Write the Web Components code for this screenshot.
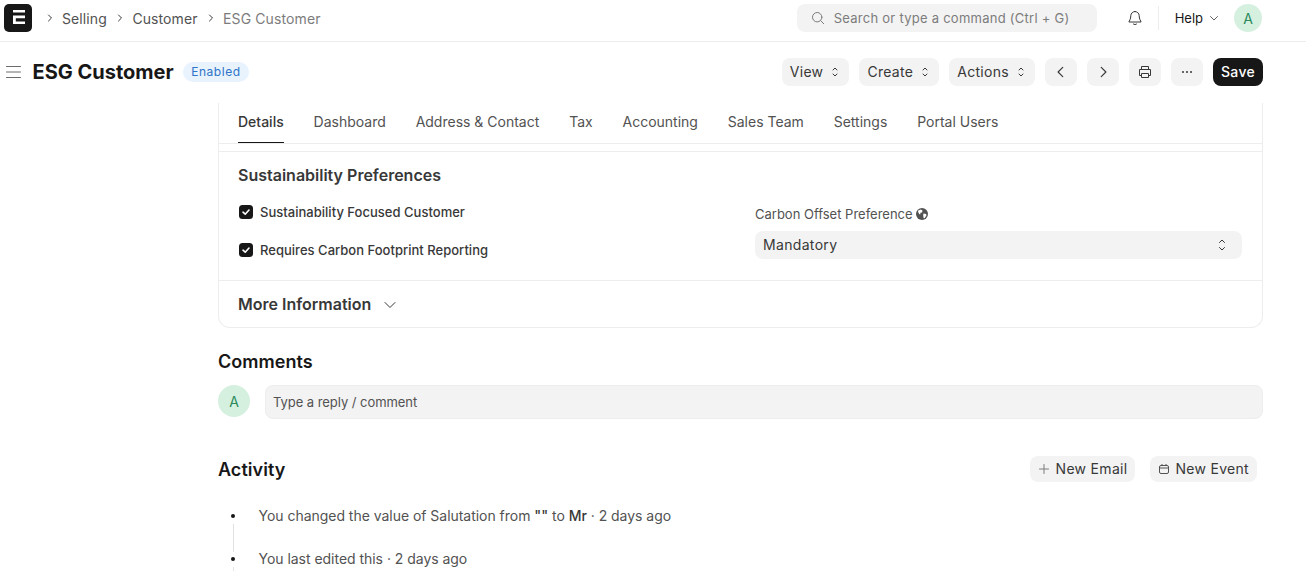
<!DOCTYPE html>
<html><head><meta charset="utf-8">
<style>
html,body{margin:0;padding:0;background:#fff;height:571px;overflow:hidden}
body{font-family:Inter,"Liberation Sans",sans-serif;color:#383838;display:flex;flex-direction:column}
</style></head><body>
<app-navbar></app-navbar>
<page-head></page-head>
<main-area></main-area>
<script>
const I={
 chev:(d,s=12)=>`<svg width="${s}" height="${s}" viewBox="0 0 12 12" fill="none" stroke="currentColor" stroke-width="1" stroke-linecap="round" stroke-linejoin="round"><path d="${d}"/></svg>`,
 updown:`<svg width="12" height="14" viewBox="0 0 12 14" fill="none" stroke="currentColor" stroke-width="1" stroke-linecap="round" stroke-linejoin="round"><path d="M4 5 6 3l2 2M4 9l2 2 2-2"/></svg>`
};
function def(name,html){customElements.define(name,class extends HTMLElement{constructor(){super();this.attachShadow({mode:"open"}).innerHTML=html}})}

def("app-btn",`<style>
:host{display:inline-flex;align-items:center;justify-content:center;height:var(--h,28px);background:#f3f3f3;border-radius:8px;color:#383838;font-size:14px;letter-spacing:.3px;box-sizing:border-box;padding:var(--p,0 8px);padding-bottom:1px;gap:var(--g,6px);white-space:nowrap;width:var(--w,auto)}
:host([dark]){background:#171717;color:#fff;font-weight:500}
::slotted(svg){flex:none;margin-top:1px}
</style><slot></slot>`);

def("app-navbar",`<style>
:host{display:flex;align-items:center;height:36px;border-bottom:1px solid #ededed;flex:none;font-size:14px;padding:0 44px 5px 4px;box-sizing:content-box}
.logo{width:28px;height:28px;background:#171717;border-radius:5px;display:flex;align-items:center;justify-content:center;margin-right:12px}
.logo svg{margin:-2px 0 0 1px}
.crumb{display:flex;align-items:center;color:#525252;letter-spacing:.1px}
.crumb svg{margin-right:6px;color:#383838}
.crumb span{margin-right:7.5px}
.crumb.last span{color:#7c7c7c}
.search{margin-left:auto;width:300px;height:28px;background:#f3f3f3;border-radius:8px;display:flex;align-items:center;box-sizing:border-box;padding-left:14px;gap:9px;color:#7c7c7c;font-size:13px;letter-spacing:.26px}
.bell{margin-left:30px;display:flex;color:#383838}
.div{width:1px;height:24px;background:#ededed;margin:0 16px 0 15px}
.help{font-size:13px;color:#171717;display:flex;align-items:center;gap:6px;letter-spacing:0}
.help svg{color:#525252}
.av{margin-left:15px;width:28px;height:28px;border-radius:50%;background:#d6f0e0;color:#2a8a5c;display:flex;align-items:center;justify-content:center;font-size:14px}
</style>
<div class="logo"><svg width="12" height="14" viewBox="0 0 12 14"><path fill="#fff" d="M0 0h12v2.6H0zM0 5.6h12v2.6H2.8v3.2H12V14H0z"/></svg></div>
<div class="crumb"><svg width="12" height="12" viewBox="0 0 12 12" fill="none" stroke="currentColor" stroke-linecap="round" stroke-linejoin="round"><path d="M4.5 3 7.5 6l-3 3"/></svg><span>Selling</span></div>
<div class="crumb"><svg width="12" height="12" viewBox="0 0 12 12" fill="none" stroke="currentColor" stroke-linecap="round" stroke-linejoin="round"><path d="M4.5 3 7.5 6l-3 3"/></svg><span>Customer</span></div>
<div class="crumb last"><svg width="12" height="12" viewBox="0 0 12 12" fill="none" stroke="currentColor" stroke-linecap="round" stroke-linejoin="round"><path d="M4.5 3 7.5 6l-3 3"/></svg><span>ESG Customer</span></div>
<div class="search"><svg width="14" height="14" viewBox="0 0 14 14" fill="none" stroke="#7c7c7c" stroke-linecap="round"><circle cx="6.2" cy="6.2" r="4.7"/><path d="m9.7 9.7 3 3"/></svg><span>Search or type a command (Ctrl + G)</span></div>
<div class="bell"><svg width="16" height="16" viewBox="0 0 16 16" fill="none" stroke="currentColor" stroke-linecap="round" stroke-linejoin="round"><path d="M8 1.5a4.2 4.2 0 0 0-4.2 4.2c0 3.6-1.6 5.2-1.9 6.3h12.2c-.3-1.1-1.9-2.7-1.9-6.3A4.2 4.2 0 0 0 8 1.5Z"/><path d="M6.3 14c.5.8 3 .8 3.4 0"/></svg></div>
<div class="div"></div>
<div class="help"><span>Help</span><svg width="10" height="10" viewBox="0 0 10 10" fill="none" stroke="currentColor" stroke-width=".9" stroke-linecap="round" stroke-linejoin="round"><path d="m1.5 3.5 3.5 3.5 3.5-3.5"/></svg></div>
<div class="av">A</div>`);

const ud=I.updown;
def("page-head",`<style>
:host{display:flex;align-items:center;height:60px;flex:none;padding:0 43px 0 6px;box-sizing:border-box}
.menu{display:flex;color:#6b6b6b;margin-right:11.5px}
h1{margin:0;font-size:20px;font-weight:700;color:#171717;line-height:28px}
.badge{margin-left:9.5px;height:20px;background:#e8f3fd;color:#2f74c8;border-radius:10px;font-size:12px;letter-spacing:.55px;display:flex;align-items:center;padding:0 8px 1px;box-sizing:border-box}
.acts{margin-left:auto;display:flex;gap:10px}
</style>
<div class="menu"><svg width="15" height="14" viewBox="0 0 15 14" stroke="currentColor" stroke-linecap="round"><path d="M.5 1.5h14M.5 7h14M.5 12.5h14"/></svg></div>
<h1>ESG Customer</h1><div class="badge">Enabled</div>
<div class="acts">
<app-btn>View${ud}</app-btn><app-btn>Create${ud}</app-btn><app-btn>Actions${ud}</app-btn>
<app-btn style="--w:32px;--p:0">${I.chev("M7.5 2 3.5 6l4 4",14)}</app-btn>
<app-btn style="--w:32px;--p:0">${I.chev("M4.5 2l4 4-4 4",14)}</app-btn>
<app-btn style="--w:32px;--p:0"><svg width="16" height="16" viewBox="0 0 16 16" fill="none" stroke="#383838" stroke-linejoin="round"><path d="M4.5 5.5v-3h7v3M4.5 11.5H2.5v-6h11v6h-2"/><path d="M4.5 9.5h7v4h-7z"/></svg></app-btn>
<app-btn style="--w:32px;--p:0"><svg width="14" height="14" viewBox="0 0 14 14" fill="#383838"><circle cx="3" cy="7" r="1"/><circle cx="7" cy="7" r="1"/><circle cx="11" cy="7" r="1"/></svg></app-btn>
<app-btn dark>Save</app-btn>
</div>`);

def("tab-bar",`<style>
:host{display:flex;height:40px;border-bottom:1px solid #ededed;padding-left:19px;gap:29.85px;font-size:14px;color:#525252}
div{line-height:38px;height:40px;box-sizing:border-box;white-space:nowrap}
.on{color:#383838;font-weight:500;border-bottom:1px solid #171717}
</style><div class="on">Details</div><div>Dashboard</div><div>Address &amp; Contact</div><div>Tax</div><div>Accounting</div><div>Sales Team</div><div>Settings</div><div>Portal Users</div>`);

def("check-row",`<style>
:host{display:flex;align-items:center;gap:7px;font-size:13px;font-weight:500;color:#383838;height:20px;letter-spacing:.02px;margin-left:1px}
i{width:14px;height:14px;border-radius:3.5px;background:#171717;display:flex;align-items:center;justify-content:center}
</style><i><svg width="10" height="10" viewBox="0 0 10 10" fill="none" stroke="#fff" stroke-width="1.6" stroke-linecap="round" stroke-linejoin="round"><path d="M2 5.2 4.2 7.2 8 3"/></svg></i><slot></slot>`);

def("form-card",`<style>
:host{display:block;border:1px solid #ededed;border-top:0;border-radius:0 0 12px 12px;box-sizing:border-box;height:225px}
.sec{margin-top:7px;border-top:1px solid #ededed;height:129px;box-sizing:border-box;padding:0 20px 0 19px;display:flex}
.col{flex:1}
.l{padding-top:12px}
h3{margin:0 0 16px;font-size:16px;font-weight:600;line-height:22px;color:#383838}
.rows{display:flex;flex-direction:column;gap:18px}
.r{width:487px;flex:none;padding-top:53px;box-sizing:border-box}
.lab{font-size:13px;color:#525252;display:flex;align-items:center;gap:3px;height:18px}
.sel{margin-top:8px;height:28px;background:#f3f3f3;border-radius:8px;display:flex;align-items:center;justify-content:space-between;padding:0 14px 1px 8px;box-sizing:border-box;font-size:14px;color:#383838;letter-spacing:.33px}
.sel svg{margin-top:1px}
.more{border-top:1px solid #ededed;height:47px;box-sizing:border-box;padding:0 20px 0 19px;display:flex;align-items:center;gap:13px;font-size:16px;font-weight:600;color:#383838}
.more svg{margin-top:2px}
</style>
<tab-bar></tab-bar>
<div class="sec">
<div class="col l"><h3>Sustainability Preferences</h3><div class="rows"><check-row>Sustainability Focused Customer</check-row><check-row>Requires Carbon Footprint Reporting</check-row></div></div>
<div class="r"><div class="lab">Carbon Offset Preference <svg width="12" height="12" viewBox="0 0 12 12"><circle cx="6" cy="6" r="6" fill="#525252"/><path fill="#fff" d="M2.2 2.6 5 1.6l1.6 1.2-.6 1.6-1.6.4-.2 1.6-1-.4-1.2-2.2zM7.4 5.6l2.8.4.2 1.6-1.8 2.6-1-.2-.4-2.4z"/></svg></div>
<div class="sel"><span>Mandatory</span><svg width="12" height="14" viewBox="0 0 12 14" fill="none" stroke="#383838" stroke-linecap="round" stroke-linejoin="round"><path d="M3.5 4.5 6 2l2.5 2.5M3.5 9.5 6 12l2.5-2.5"/></svg></div></div>
</div>
<div class="more"><span>More Information</span><svg width="12" height="12" viewBox="0 0 12 12" fill="none" stroke="#383838" stroke-linecap="round" stroke-linejoin="round"><path d="m1 3.5 5 5 5-5"/></svg></div>`);

def("comment-box",`<style>
:host{display:block;margin-top:21px}
h2{margin:0;font-size:18px;font-weight:600;color:#171717;line-height:26px;letter-spacing:.05px}
.row{display:flex;gap:15px;margin-top:10px}
.av{width:32px;height:32px;border-radius:50%;background:#d6f0e0;color:#2a8a5c;display:flex;align-items:center;justify-content:center;font-size:14px;flex:none}
.in{flex:1;height:34px;background:#f3f3f3;border:1px solid #ededed;border-radius:8px;box-sizing:border-box;padding:0 7px;display:flex;align-items:center;font-size:13px;color:#525252;letter-spacing:-.05px}
</style><h2>Comments</h2><div class="row"><div class="av">A</div><div class="in">Type a reply / comment</div></div>`);

def("activity-log",`<style>
:host{display:block;margin-top:36px;position:relative}
.hd{display:flex;align-items:center;justify-content:space-between;padding-right:6px;height:28px}
h2{margin:0;font-size:18px;font-weight:600;color:#171717;letter-spacing:.05px}
.bs{display:flex;gap:15px;font-size:14px}
.tl{margin-top:23px;font-size:14px;color:#525252;line-height:20px;display:flex;flex-direction:column;gap:23px;letter-spacing:-.03px}
.it{display:flex;align-items:center;height:20px;position:relative}
.it i{width:4px;height:4px;background:#171717;border-radius:50%;margin-left:13px;margin-right:23.5px;flex:none}
.it b{font-weight:500;color:#383838}
.it::after{content:"";position:absolute;left:15px;top:18px;height:28px;width:1px;background:#e2e2e2}
</style>
<div class="hd"><h2>Activity</h2><div class="bs">
<app-btn style="--h:26px"><svg width="12" height="12" viewBox="0 0 12 12" stroke="#7c7c7c" stroke-linecap="round"><path d="M6 1.5v9M1.5 6h9"/></svg>New Email</app-btn>
<app-btn style="--g:5px;--h:26px"><svg width="12" height="12" viewBox="0 0 12 12" fill="none" stroke="#525252" stroke-linejoin="round"><rect x="1.5" y="2.5" width="9" height="8" rx="1.5"/><path d="M1.5 5h9M4 1v1.5M8 1v1.5"/></svg>New Event</app-btn>
</div></div>
<div class="tl">
<div class="it"><i></i><span>You changed the value of Salutation from <b>""</b> to <b>Mr</b> · 2 days ago</span></div>
<div class="it"><i></i><span>You last edited this · 2 days ago</span></div>
</div>`);

def("main-area",`<style>
:host{display:block;margin-left:218px;width:1045px;flex:none;margin-top:1px}
</style><form-card></form-card><comment-box></comment-box><activity-log></activity-log>`);
</script>
</body></html>
